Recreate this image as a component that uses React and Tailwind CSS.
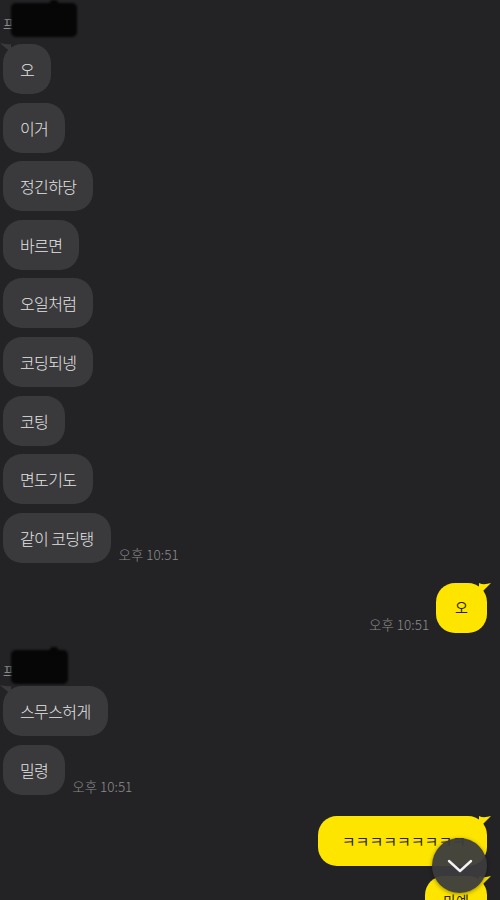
import React from 'react';

const FONT = "font-['Noto_Sans_CJK_KR','Noto_Sans',sans-serif]";

// 말풍선 꼬리 (왼쪽 위)
const LeftTail = () => (
  <svg className="absolute -left-[3px] -top-[1px]" width="11" height="9" viewBox="0 0 11 9">
    <path d="M0 0 C4 1 7 1.5 11 1 L11 9 C7 6 3 3 0 0 Z" fill="#3a3a3c" />
  </svg>
);

// 말풍선 꼬리 (오른쪽 위)
const RightTail = () => (
  <svg className="absolute -right-[4px] top-0" width="12" height="12" viewBox="0 0 12 12">
    <path d="M12 0 C8 1 4 2 0 0 L0 12 C4 8 8 4 12 0 Z" fill="#fee500" />
  </svg>
);

const Time = ({ className = '' }) => (
  <span className={`text-[13.5px] font-light leading-none text-[#8b8b8d] mb-[1px] whitespace-nowrap ${className}`}>오후 10:51</span>
);

const Bubble = ({ text, tail }) => (
  <div className="relative h-[50px] flex items-center px-[17px] rounded-[19px] bg-[#3a3a3c] text-[#e4e4e4] text-[16px] font-light tracking-[-0.6px] whitespace-nowrap">
    {tail && <LeftTail />}
    <span className="relative">{text}</span>
  </div>
);

const MyBubble = ({ text, className = '' }) => (
  <div className={`relative h-[50px] flex items-center rounded-[19px] bg-[#fee500] text-[#2b2600] whitespace-nowrap ${className}`}>
    <RightTail />
    <span className="relative">{text}</span>
  </div>
);

const NameBlock = ({ width }) => (
  <div className="relative h-[34px]" style={{ width }}>
    <span className="absolute left-[3px] top-[14px] text-[13px] leading-none text-[#8a8a8a]">프</span>
    <div className="absolute left-[11px] right-0 top-0 bottom-0 bg-[#060606] rounded-[5px] blur-[1px]" />
    <div className="absolute left-[50px] -top-[3px] w-[8px] h-[6px] bg-[#060606] rounded-full blur-[1px]" />
  </div>
);

const friendMsgs1 = ['오', '이거', '정긴하당', '바르면', '오일처럼', '코딩되넹', '코팅', '면도기도'];

const App = () => {
  return (
    <div className={`relative w-[500px] h-[900px] overflow-hidden bg-[#232326] ${FONT}`}>
      <div className="flex flex-col pt-[3px]">
        <NameBlock width={77} />

        <div className="flex flex-col gap-[8.6px] mt-[7px] pl-[3px]">
          {friendMsgs1.map((m, i) => (
            <div key={i} className="flex">
              <Bubble text={m} tail={i === 0} />
            </div>
          ))}
          <div className="flex items-end gap-[8px]">
            <Bubble text="같이 코딩탱" />
            <Time />
          </div>
        </div>

        <div className="flex justify-end items-end gap-[7px] mt-[20px] pr-[13px]">
          <Time />
          <MyBubble text="오" className="px-[19px] text-[14px]" />
        </div>

        <div className="mt-[17px]">
          <NameBlock width={68} />
        </div>

        <div className="flex flex-col gap-[9px] mt-[2px] pl-[3px]">
          <div className="flex">
            <Bubble text="스무스허게" tail />
          </div>
          <div className="flex items-end gap-[7px]">
            <Bubble text="밀령" />
            <Time />
          </div>
        </div>

        <div className="flex flex-col items-end gap-[10px] mt-[21px] pr-[13px]">
          <MyBubble text="ㅋㅋㅋㅋㅋㅋㅋㅋㅋ" className="pl-[24px] pr-[21px] text-[15px]" />
          <MyBubble text="마예" className="px-[18px] text-[14px]" />
        </div>
      </div>

      {/* 아래로 스크롤 버튼 */}
      <button className="absolute left-[432px] top-[838px] w-[55px] h-[55px] rounded-full bg-[#3c3c3e]/95 flex items-center justify-center shadow-[0_1px_4px_rgba(0,0,0,0.4)]">
        <svg width="26" height="16" viewBox="0 0 26 16" fill="none">
          <path d="M2 3 L13 13 L24 3" stroke="#f2f2f2" strokeWidth="2.4" strokeLinecap="round" strokeLinejoin="round" />
        </svg>
      </button>
    </div>
  );
};

export default App;
